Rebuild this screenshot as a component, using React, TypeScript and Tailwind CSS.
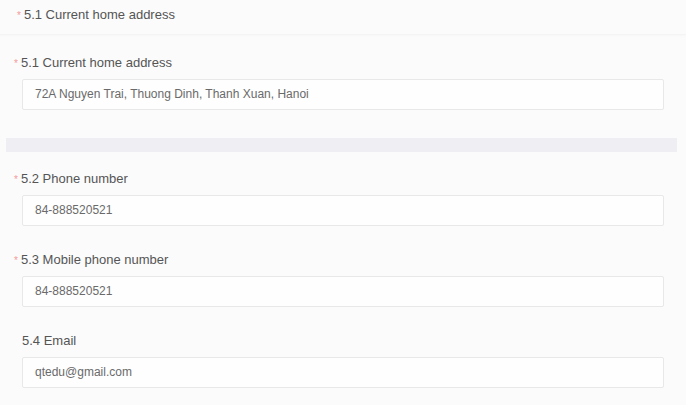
export default function App() {
  const fields = [
    { label: "5.2 Phone number", value: "84-888520521", required: true },
    { label: "5.3 Mobile phone number", value: "84-888520521", required: true },
    { label: "5.4 Email", value: "qtedu@gmail.com", required: false },
  ];

  const Field = ({ label, value, required }: { label: string; value: string; required: boolean }) => (
    <div className="px-[22px] pr-[22px]">
      <div className="h-5 leading-5 text-[13px] text-[#555]">
        {required && <span className="-ml-[8px] mr-[3px] text-[10px] text-[#f39a9a]">*</span>}
        {label}
      </div>
      <div className="mt-[6px] h-[31px] border border-[#e8e8e8] rounded-[2px] bg-[#fefefe] pl-[12px] text-[12px] leading-[29px] text-[#6a6a6a]">
        {value}
      </div>
    </div>
  );

  return (
    <div className="w-[686px] h-[405px] overflow-hidden bg-[#fbfbfb] font-['Liberation_Sans',Arial,sans-serif]">
      <div className="h-[35px] pl-[17px] pt-[5px] text-[13px] leading-5 text-[#555] border-b border-[#f4f4f4] shadow-[0_1px_2px_rgba(0,0,0,0.02)]">
        <span className="mr-[3px] text-[10px] text-[#f39a9a]">*</span>
        5.1 Current home address
      </div>

      <div className="h-[103px] pt-[18px]">
        <Field label="5.1 Current home address" value="72A Nguyen Trai, Thuong Dinh, Thanh Xuan, Hanoi" required />
      </div>

      <div className="mx-[6px] mr-[9px] h-[14px] bg-[#efeff3]" />

      <div className="pt-[17px] flex flex-col gap-[24px]">
        {fields.map((f) => (
          <Field key={f.label} {...f} />
        ))}
      </div>
    </div>
  );
}
